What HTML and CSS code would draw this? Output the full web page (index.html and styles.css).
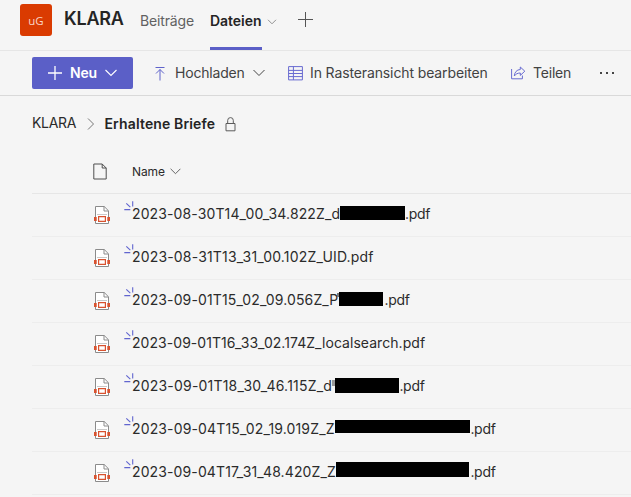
FILE: index.html
```
<!DOCTYPE html>
<html lang="de">
<head>
<meta charset="utf-8">
<title>KLARA</title>
<link rel="stylesheet" href="styles.css">
</head>
<body>
<svg class="defs" aria-hidden="true">
  <symbol id="pdf" viewBox="0 0 16 20">
    <path d="M1.5 11V1.5h8.7l4.3 4.3V18.5h-13V11" fill="#fff" stroke="#8b8b8b"/>
    <path d="M10 1.5V6h4.5" fill="none" stroke="#8b8b8b"/>
    <path d="M3 9.5h10" stroke="#c9c9c9"/>
    <path d="M0 12h2.7v4H0zM13.3 12H16v4h-2.7z" fill="#d8522f"/>
    <path d="M4.6 11.6h6.8v4.8H4.6z" fill="#fff" stroke="#d8522f" stroke-width="1.2"/>
  </symbol>
  <symbol id="new" viewBox="0 0 10 10">
    <path d="M.3 8.6h6M2.3 2.3l4 3.9M8.7.2v5.2" fill="none" stroke="#6165cf" stroke-width="1.1"/>
  </symbol>
</svg>
<header class="channel">
  <div class="tile">uG</div>
  <h1>KLARA</h1>
  <span class="tab posts">Beiträge</span>
  <span class="tab files">Dateien</span>
  <svg class="tab-chev" width="10" height="6" viewBox="0 0 10 6"><path d="M1 .8l4 4 4-4" fill="none" stroke="#919191"/></svg>
  <svg class="add" width="15" height="15" viewBox="0 0 15 15"><path d="M7.5 0v15M0 7.5h15" stroke="#555"/></svg>
</header>
<nav class="toolbar">
  <button class="new-btn">
    <svg width="14" height="14" viewBox="0 0 14 14"><path d="M7 0v14M0 7h14" stroke="#fff" stroke-width="1.3"/></svg>
    <span>Neu</span>
    <svg width="12" height="8" viewBox="0 0 12 8"><path d="M.5 1L6 6.5 11.5 1" fill="none" stroke="#fff" stroke-width="1.1"/></svg>
  </button>
  <svg class="upload" width="10" height="15" viewBox="0 0 10 15"><path d="M.5 1.5h9M5 14.5V3.5M1 7.5l4-4 4 4" fill="none" stroke="#5f63cb"/></svg>
  <span class="cmd load">Hochladen</span>
  <svg class="load-chev" width="12" height="8" viewBox="0 0 12 8"><path d="M.5 1L6 6.5 11.5 1" fill="none" stroke="#444"/></svg>
  <svg class="grid" width="15" height="15" viewBox="0 0 15 15"><path d="M.6.6h13.8v13.3H.6zM5.4.5v13.4M.5 4.4h14M.5 7.5h14M.5 10.6h14" fill="none" stroke="#686bd1"/></svg>
  <span class="cmd raster">In Rasteransicht bearbeiten</span>
  <svg class="share" width="15" height="14" viewBox="0 0 15 14"><path d="M.6 3v9.8h10.8V9.5" fill="none" stroke="#686bd1"/><path d="M9.3 1l4.5 4.2-4.5 4.2V7C6.5 7 4.8 8 3.3 10c.3-3.8 2.4-6.3 6-6.5z" fill="none" stroke="#686bd1"/></svg>
  <span class="cmd teilen">Teilen</span>
  <svg class="more" width="16" height="4" viewBox="0 0 16 4"><path d="M1 1h2v2H1zM7 1h2v2H7zM13 1h2v2h-2z" fill="#444"/></svg>
</nav>
<main>
  <div class="crumbs">
    <span class="root">KLARA</span>
    <svg class="sep" width="8" height="12" viewBox="0 0 8 12"><path d="M1 .5L6.5 6 1 11.5" fill="none" stroke="#777"/></svg>
    <span class="here">Erhaltene Briefe</span>
    <svg class="lock" width="11" height="15" viewBox="0 0 11 15"><path d="M1 6.5h9v7.3H1zM2.7 6.5V3.4a2.8 2.8 0 0 1 5.6 0v3.1" fill="none" stroke="#5c5c5c"/></svg>
  </div>
  <div class="list">
    <div class="head">
      <svg class="doc" width="14" height="17" viewBox="0 0 14 17"><path d="M.8 1h8.4l4 4v11H.8zM9.2 1v4h4" fill="none" stroke="#4f4f4f"/></svg>
      <span class="name">Name</span>
      <svg class="name-chev" width="11" height="7" viewBox="0 0 11 7"><path d="M.6.8l4.9 4.9L10.4.8" fill="none" stroke="#666"/></svg>
    </div>
    <div class="row"><svg class="pdf"><use href="#pdf"/></svg><svg class="glint"><use href="#new"/></svg><span class="file r1">2023-08-30T14_00_34.822Z_d</span><i class="bar b1"></i><span class="ext">.pdf</span></div>
    <div class="row"><svg class="pdf"><use href="#pdf"/></svg><svg class="glint"><use href="#new"/></svg><span class="file r2">2023-08-31T13_31_00.102Z_UID.pdf</span></div>
    <div class="row"><svg class="pdf"><use href="#pdf"/></svg><svg class="glint"><use href="#new"/></svg><span class="file r3">2023-09-01T15_02_09.056Z_P</span><i class="smudge s3"></i><i class="bar b3"></i><span class="ext">.pdf</span></div>
    <div class="row"><svg class="pdf"><use href="#pdf"/></svg><svg class="glint"><use href="#new"/></svg><span class="file r4">2023-09-01T16_33_02.174Z_localsearch.pdf</span></div>
    <div class="row"><svg class="pdf"><use href="#pdf"/></svg><svg class="glint"><use href="#new"/></svg><span class="file r5">2023-09-01T18_30_46.115Z_d</span><i class="smudge s5"></i><i class="bar b5"></i><span class="ext">.pdf</span></div>
    <div class="row"><svg class="pdf"><use href="#pdf"/></svg><svg class="glint"><use href="#new"/></svg><span class="file r6">2023-09-04T15_02_19.019Z_Z</span><i class="bar b6"></i><span class="ext">.pdf</span></div>
    <div class="row"><svg class="pdf"><use href="#pdf"/></svg><svg class="glint"><use href="#new"/></svg><span class="file r7">2023-09-04T17_31_48.420Z_Z</span><i class="bar b7"></i><span class="ext">.pdf</span></div>
  </div>
</main>
</body>
</html>
```
FILE: styles.css
```
* { box-sizing: border-box; }
body { margin: 0; height: 497px; overflow: hidden; background: #f5f5f5; color: #2b2b2b; font: 14px/20px Inter, "Liberation Sans", sans-serif; white-space: nowrap; }
svg, span, i, h1, .tile { flex: none; }
.defs { display: none; }
.channel { display: flex; align-items: flex-start; height: 51px; padding: 4px 0 0 20px; border-bottom: 1px solid #e6e6e6; }
.tile { width: 32px; height: 32px; border-radius: 3px; background: #da3b01; color: #f9d5c8; font: 11.5px/33px "Open Sans", sans-serif; text-align: center; }
h1 { width: 60px; margin: 3px 0 0 12px; font-size: 18px; line-height: 24px; font-weight: 600; letter-spacing: -.2px; color: #242424; }
.tab { margin-top: 7px; }
.posts { width: 54px; margin-left: 16px; letter-spacing: -.15px; color: #616161; }
.files { width: 52px; height: 39px; margin-left: 16px; font-weight: 600; letter-spacing: -.05px; color: #242424; border-bottom: 3px solid #5b5fc7; }
.tab-chev { margin: 15px 0 0 5px; }
.add { margin: 8px 0 0 21px; }
.toolbar { display: flex; align-items: center; height: 45px; padding-left: 32px; border-bottom: 1px solid #d9d9d9; }
.new-btn { display: flex; align-items: center; flex: none; width: 101px; height: 32px; padding: 0 0 0 16px; border: 0; border-radius: 2px; background: #5b5fc7; color: #fff; font: 600 14px/20px Inter, sans-serif; }
.new-btn span { width: 27px; margin: 0 8px; letter-spacing: -.2px; }
.cmd { color: #424242; }
.upload { margin-left: 22px; }
.load { width: 70px; margin-left: 10px; letter-spacing: -.2px; }
.load-chev { margin-left: 8px; }
.grid { margin-left: 23px; }
.raster { width: 178px; margin-left: 7px; letter-spacing: -.12px; }
.share { margin-left: 23px; }
.teilen { width: 38px; margin-left: 7px; letter-spacing: -.2px; }
.more { margin-left: 28px; }
.crumbs { display: flex; align-items: center; height: 57px; padding: 0 0 1px 32px; }
.root { width: 45px; margin-top: -2px; letter-spacing: -.3px; }
.sep { margin-left: 10px; }
.here { width: 111px; margin-left: 9.5px; font-weight: 600; letter-spacing: .14px; color: #242424; }
.lock { margin-left: 9px; }
.list { margin-left: 32px; }
.head { display: flex; align-items: center; height: 41px; padding: 0 0 3px 61px; border-bottom: 1px solid #e6e6e6; font-size: 12px; }
.name { width: 33px; margin-left: 25px; letter-spacing: -.1px; }
.name-chev { margin-left: 5px; }
.row { display: flex; align-items: flex-start; height: 43px; padding: 10px 0 0 62px; border-bottom: 1px solid #ededed; }
.pdf { width: 16px; height: 20px; margin-top: 1px; }
.glint { width: 10px; height: 10px; margin: -3px -2px 0 14px; }
.bar { height: 14px; margin-top: 2px; background: #000; }
.smudge { width: 3px; margin-left: -3px; background: #999; }
.s3 { width: 2px; height: 4px; margin: 3px 0 0 -2px; background: #777; }
.s5 { height: 6px; margin-top: 4px; }
.ext { letter-spacing: -.3px; }
.r1 { width: 208px; letter-spacing: .12px; }
.r2 { letter-spacing: .17px; }
.r3 { width: 207px; letter-spacing: .13px; }
.r4 { letter-spacing: .05px; }
.r5, .r6 { width: 203.4px; letter-spacing: .14px; }
.r5 { letter-spacing: .2px; }
.r7 { width: 204.4px; letter-spacing: .12px; }
.b1 { width: 65px; }
.b3 { width: 43.5px; margin-right: 2px; }
.b5 { width: 64px; height: 15px; margin-top: 2px; }
.b6 { width: 135px; height: 13px; margin-top: 1px; }
.b7 { width: 133px; height: 15px; margin: 0 1px 0 0; }
```
